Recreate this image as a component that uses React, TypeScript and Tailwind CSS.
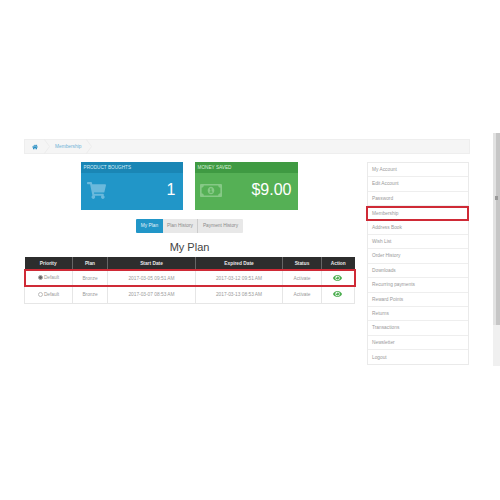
import { FaEye, FaHome, FaRegMoneyBillAlt, FaShoppingCart } from "react-icons/fa";

const accountLinks = [
  "My Account",
  "Edit Account",
  "Password",
  "Membership",
  "Address Book",
  "Wish List",
  "Order History",
  "Downloads",
  "Recurring payments",
  "Reward Points",
  "Returns",
  "Transactions",
  "Newsletter",
  "Logout",
];

const plans = [
  { selected: true, start: "2017-03-05 09:51 AM", end: "2017-03-12 09:51 AM" },
  { selected: false, start: "2017-03-07 08:53 AM", end: "2017-03-13 08:53 AM" },
];

function Crumb() {
  return (
    <svg width="6" height="15" viewBox="0 0 6 15" className="shrink-0">
      <path d="M0 0 L5.5 7.5 L0 15" fill="none" stroke="#ececec" strokeWidth="1" />
    </svg>
  );
}

export default function App() {
  return (
    <div className="relative h-[500px] w-[500px] overflow-hidden bg-white pl-6 pt-[139px] font-['Liberation_Sans',Arial,sans-serif]">
      <div className="flex h-[15px] w-[446px] items-center border border-[#eeeeee] bg-[#f5f5f5] text-[4.8px] text-[#6fb3d6]">
        <div className="flex w-[19px] justify-center">
          <FaHome className="h-[6px] w-[6px] text-[#2a8fc4]" />
        </div>
        <Crumb />
        <span className="ml-[5px]">Membership</span>
        <span className="ml-[5px] flex">
          <Crumb />
        </span>
      </div>

      <div className="mt-[8px] flex w-[446px] justify-between">
        <main className="w-[331px]">
          <div className="flex justify-center gap-3 pr-[1px]">
            <div className="h-[48px] w-[102px] bg-[#2196c8] text-white">
              <div className="flex h-[11px] items-center bg-[#1a86b5] px-[3px] pt-[1px] text-[4.7px] text-[#d5ecf6]">PRODUCT BOUGHTS</div>
              <div className="flex h-[37px] items-center justify-between pb-[3px] pl-[6px] pr-[7px]">
                <FaShoppingCart className="h-[17px] w-[19px] text-[#6bb9dc]" />
                <span className="text-[16px]">1</span>
              </div>
            </div>
            <div className="h-[48px] w-[103px] bg-[#55b055] text-white">
              <div className="flex h-[11px] items-center bg-[#3f9a42] px-[3px] pt-[1px] text-[4.7px] text-[#d9efd9]">MONEY SAVED</div>
              <div className="flex h-[37px] items-center justify-between pb-[3px] pl-[5px] pr-[6px]">
                <FaRegMoneyBillAlt className="h-[19px] w-[22px] text-[#86c986]" />
                <span className="text-[16px]">$9.00</span>
              </div>
            </div>
          </div>

          <div className="mt-[9px] flex justify-center text-[4.8px]">
            <div className="flex h-[14px] w-[27px] items-center justify-center rounded-l-[1px] bg-[#2196c8] text-[#e3f2f9]">My Plan</div>
            <div className="flex h-[14px] w-[35px] items-center justify-center border-r border-[#cccccc] bg-[#e8e8e8] text-[#8a8a8a]">Plan History</div>
            <div className="flex h-[14px] w-[45px] items-center justify-center rounded-r-[1px] bg-[#e8e8e8] text-[#8a8a8a]">Payment History</div>
          </div>

          <h1 className="mt-[7px] text-center text-[11px] leading-[15px] text-[#444444]">My Plan</h1>

          <table className="mt-[2px] w-[331px] table-fixed border-collapse text-center text-[4.8px] text-[#999999]">
            <thead className="bg-[#2d2d2d] font-normal text-[#e8e8e8]">
              <tr className="h-[13px]">
                <th className="w-[48px] border-r border-[#666666]">Priority</th>
                <th className="w-[35px] border-r border-[#666666]">Plan</th>
                <th className="w-[88px] border-r border-[#666666]">Start Date</th>
                <th className="w-[87px] border-r border-[#666666]">Expired Date</th>
                <th className="w-[39px] border-r border-[#666666]">Status</th>
                <th>Action</th>
              </tr>
            </thead>
            <tbody>
              {plans.map((plan) => (
                <tr
                  key={plan.start}
                  className={
                    plan.selected
                      ? "h-[16px] outline-2 -outline-offset-1 outline-[#cf2a36]"
                      : "h-[17px] border-b border-[#e6e6e6]"
                  }
                >
                  <td className="border-x border-[#e6e6e6] pt-[1px]">
                    <span className="inline-flex items-center gap-[1px]">
                      <span
                        className={
                          plan.selected
                            ? "h-[5px] w-[5px] rounded-full border border-[#aaaaaa] bg-[#666666]"
                            : "h-[5px] w-[5px] rounded-full border border-[#bbbbbb] bg-white"
                        }
                      />
                      Default
                    </span>
                  </td>
                  <td className="border-r border-[#e6e6e6] pt-[1px]">Bronze</td>
                  <td className="border-r border-[#e6e6e6] pt-[1px]">{plan.start}</td>
                  <td className="border-r border-[#e6e6e6] pt-[1px]">{plan.end}</td>
                  <td className="border-r border-[#e6e6e6] pt-[1px]">Activate</td>
                  <td className="border-r border-[#e6e6e6] pr-[1px]">
                    <FaEye className="mx-auto h-[8px] w-[9px] text-[#4cae50]" />
                  </td>
                </tr>
              ))}
            </tbody>
          </table>
        </main>

        <aside className="mr-[1px] w-[102px] self-start border border-[#eaeaea] text-[4.8px] text-[#999999]">
          {accountLinks.map((link) => (
            <div
              key={link}
              className={
                link === "Membership"
                  ? "-ml-[2px] -mr-px flex h-[14.4px] items-center border-2 border-[#cf2a36] px-[4px]"
                  : "flex h-[14.4px] items-center border-b border-[#eeeeee] px-[4px] last:border-b-0"
              }
            >
              {link}
            </div>
          ))}
        </aside>
      </div>

      <div className="absolute right-0 top-[133px] h-[233px] w-[7px] bg-[#f0f0f0]">
        <div className="relative h-[192px] w-[7px] border-l-[3px] border-[#e2e2e2] bg-[#c6c6c6]">
          <div className="absolute -left-[1px] top-[63px] h-[4px] w-[3px] bg-[#999999]" />
        </div>
      </div>
    </div>
  );
}
